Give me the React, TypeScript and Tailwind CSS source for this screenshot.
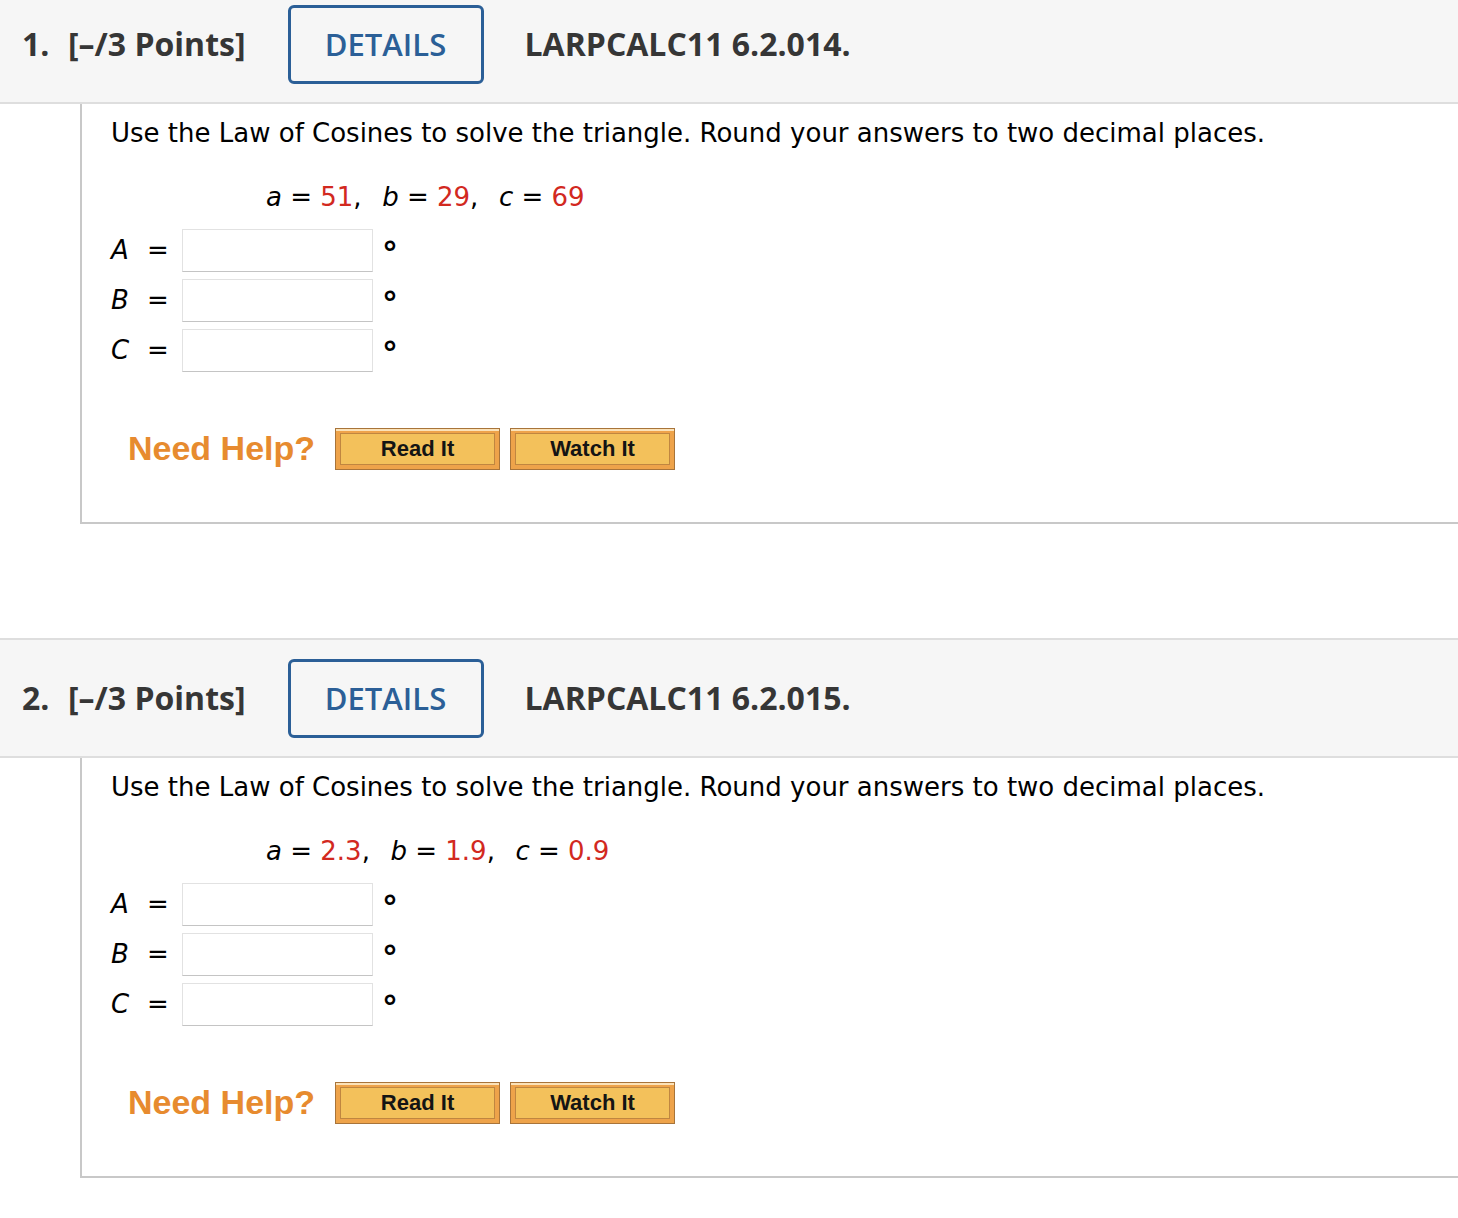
import React from "react";

interface QuestionParams {
  num: number;
  code: string;
  a: string;
  b: string;
  c: string;
}

const body = { fontFamily: '"DejaVu Sans", Verdana, sans-serif' };

const HelpButton: React.FC<{ label: string }> = ({ label }) => (
  <button className="w-[165px] h-[42px] border border-[#a8743a] bg-[#eea34a] p-[4px] shadow-[inset_0_2px_0_#fbe2b8]">
    <div
      className="w-full h-full border border-[#c08640] bg-[#f3c15b] flex items-center justify-center text-[22px] font-bold text-[#141414]"
      style={{ fontFamily: '"Liberation Sans", Arial, sans-serif' }}
    >
      {label}
    </div>
  </button>
);

const AngleRow: React.FC<{ name: string }> = ({ name }) => (
  <div className="flex items-center h-[50px]">
    <span className="italic w-[36px]">{name}</span>
    <span className="w-[35px]">=</span>
    <div className="w-[191px] h-[43px] border border-[#e2e2e2] border-b-[#c4c4c4] bg-white" />
    <span className="ml-[9px] mt-[7px] text-[32px] font-bold leading-none">°</span>
  </div>
);

const Question: React.FC<QuestionParams> = ({ num, code, a, b, c }) => {
  return (
    <div>
      <div
        className="h-[120px] bg-[#f6f6f6] border-y-2 border-[#dedede] flex items-center text-[#363636]"
        style={{ fontFamily: '"Open Sans", sans-serif' }}
      >
        <span className="ml-[22px] w-[46px] text-[32px] font-bold">{num}.</span>
        <span className="text-[32px] font-bold">[–/3 Points]</span>
        <div className="ml-[42px] w-[196px] h-[79px] border-[3px] border-[#2b5f97] rounded-[6px] flex items-center justify-center text-[31px] font-semibold text-[#2b5f97]">
          DETAILS
        </div>
        <span className="ml-[41px] text-[32px] font-bold">{code}</span>
      </div>
      <div
        className="ml-[80px] h-[420px] border-l-2 border-b-2 border-[#c8c8c8] pl-[29px] pt-[10px] text-[26px] text-black"
        style={body}
      >
        <p>Use the Law of Cosines to solve the triangle. Round your answers to two decimal places.</p>
        <p className="mt-[25px] ml-[155px] whitespace-pre">
          <i>a</i> = <span className="text-[#d2291f]">{a}</span>,  <i className="ml-[4px]">b</i> = <span className="text-[#d2291f]">{b}</span>,  <i className="ml-[4px]">c</i> = <span className="text-[#d2291f]">{c}</span>
        </p>
        <div className="mt-[8px]">
          <AngleRow name="A" />
          <AngleRow name="B" />
          <AngleRow name="C" />
        </div>
        <div className="mt-[48px] ml-[17px] flex items-center gap-[10px]">
          <span
            className="text-[34px] font-bold text-[#e78b2f] mr-[10px]"
            style={{ fontFamily: '"Liberation Sans", Arial, sans-serif' }}
          >
            Need Help?
          </span>
          <HelpButton label="Read It" />
          <HelpButton label="Watch It" />
        </div>
      </div>
    </div>
  );
};

export default function App() {
  return (
    <div className="w-[1458px] h-[1218px] overflow-hidden bg-white">
      <div className="-mt-[16px]">
        <Question num={1} code="LARPCALC11 6.2.014." a="51" b="29" c="69" />
        <div className="h-[114px]" />
        <Question num={2} code="LARPCALC11 6.2.015." a="2.3" b="1.9" c="0.9" />
      </div>
    </div>
  );
}
